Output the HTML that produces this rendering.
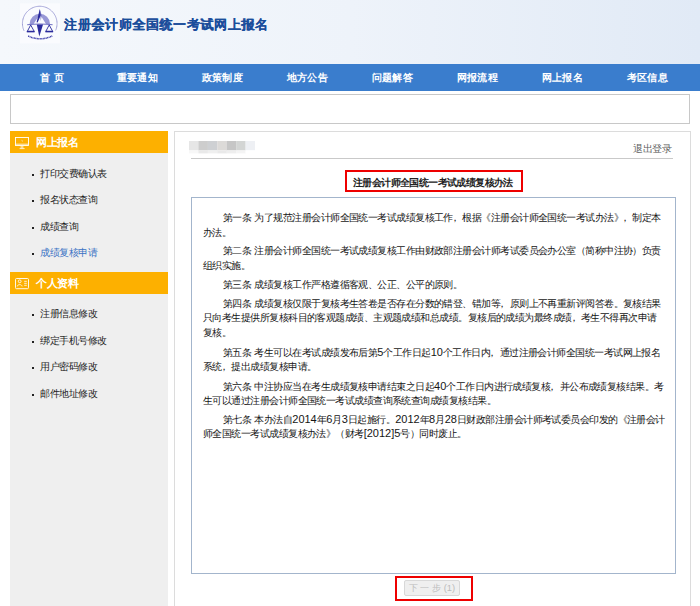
<!DOCTYPE html>
<html><head><meta charset="utf-8">
<style>
*{margin:0;padding:0;box-sizing:border-box}
html,body{width:700px;height:606px;overflow:hidden;background:#fff;font-family:"Liberation Sans",sans-serif;font-size:9.4px;color:#333}
.hdr{position:absolute;left:0;top:0;width:700px;height:64px;background:linear-gradient(90deg,#f5f8fc 0%,#eef3fa 50%,#e1eaf6 100%)}
.logo{position:absolute;left:15px;top:0px;width:50px;height:50px}
.title{position:absolute;left:64px;top:15px;font-size:13.4px;letter-spacing:0.64px;font-weight:bold;color:#1a4d9b;text-shadow:0.35px 0 0 #1a4d9b;white-space:nowrap;line-height:20px}
.nav{position:absolute;left:0;top:64px;width:700px;height:27px;background:#3a7dcd}
.nav span{position:absolute;top:0;width:85px;letter-spacing:0.4px;text-align:center;line-height:27px;color:#fff;font-weight:bold;font-size:10.4px;white-space:nowrap}
.search{position:absolute;left:10px;top:94px;width:680px;height:30px;border:1px solid #c8c8c8;background:#fff}
.side{position:absolute;left:10px;top:131px;width:158px;height:480px;background:#efefef}
.sh{position:absolute;left:0;width:158px;height:22px;background:#fdb000;color:#fff;font-weight:bold;font-size:11px;letter-spacing:-0.4px;line-height:23px}
.sh .t{position:absolute;left:26px;top:0}
.sh svg{position:absolute}
.it{position:absolute;left:30px;font-size:9.7px;letter-spacing:-0.45px;color:#1e1e1e;white-space:nowrap;line-height:14px}
.it i{position:absolute;left:-8.5px;top:6.9px;width:2px;height:2.4px;background:#222}
.main{position:absolute;left:174px;top:131px;width:517px;height:480px;border:1px solid #dcdcdc;background:#fff}
.mosaic{position:absolute;left:189px;top:141.4px;width:66px;height:13px}
.logout{position:absolute;left:633px;top:141.5px;color:#5a5a5a;font-size:10px;letter-spacing:-0.3px;white-space:nowrap;line-height:14px}
.divider{position:absolute;left:191px;top:158px;width:482px;height:1px;background:#c9c9c9}
.rtitle{position:absolute;left:345px;top:170px;width:178px;height:22px;border:2px solid #e00;}
.rtitle span{position:absolute;left:6px;top:5px;font-size:9.7px;letter-spacing:-0.6px;font-weight:bold;color:#222;white-space:nowrap;line-height:12px}
.box{position:absolute;left:191px;top:197px;width:485px;height:377px;border:1px solid #a3b5cc}
.txt{position:absolute;left:203px;top:0;white-space:nowrap;color:#333;line-height:14.8px}
.ln{position:absolute;left:203px;white-space:nowrap;line-height:14px;color:#151515;font-size:9.7px;letter-spacing:-0.55px}
.d{font-size:11px;letter-spacing:0}
.cm{position:relative;left:-3px}
.sp{letter-spacing:0.4px}
.rbtn{position:absolute;left:395px;top:576px;width:78px;height:25px;border:2px solid #e00}
.btn{position:absolute;left:404px;top:580px;width:56px;height:16px;border:1px solid #d8d8d8;border-radius:2px;background:#efefef;color:#bcbcbc;font-size:9.4px;line-height:14px;text-align:center;white-space:nowrap}
</style></head><body>
<div class="hdr"></div>
<svg class="logo" viewBox="0 0 50 50">
  <rect x="5" y="3.3" width="40" height="40" fill="#fafbfe"/>
  <path d="M8.95 30.6 A17.3 17.3 0 1 1 40.55 30.6" fill="none" stroke="#5656b4" stroke-width="1" stroke-dasharray="0.8 0.4" opacity="0.75"/>
  <path d="M13.2 36 Q25 41.6 37.2 36" fill="none" stroke="#3a3aa8" stroke-width="1.5" stroke-dasharray="1 0.5"/>
  <path d="M14.6 24 A10.2 10.2 0 0 1 35 24 L31 24 L24.9 14.2 L18.6 24Z" fill="#9898d6"/>
  <path d="M24.75 8.9 L26 15 L22.6 22.6 L21.6 22.2 Z" fill="#2a2a9c"/>
  <path d="M24.75 8.9 L27 16 L25.4 21 Z" fill="#6a6ac0" opacity="0.6"/>
  <path d="M12.2 24.8 Q24.75 23.2 37.6 24.8" fill="none" stroke="#7070c4" stroke-width="1.1"/>
  <path d="M21.8 24.6 L28 24.6 L24.3 36.4 Z" fill="#2a2a9c"/>
  <path d="M15.7 25 L12.3 31.4 L19.2 31.4 Z" fill="none" stroke="#2a2a9c" stroke-width="0.9"/>
  <path d="M11.8 31.6 L19.6 31.6" stroke="#2a2a9c" stroke-width="1.5"/>
  <path d="M34.2 25 L30.8 31.4 L37.7 31.4 Z" fill="none" stroke="#2a2a9c" stroke-width="0.9"/>
  <path d="M30.4 31.6 L38.1 31.6" stroke="#2a2a9c" stroke-width="1.5"/>
</svg>
<div class="title">注册会计师全国统一考试网上报名</div>
<div class="nav">
  <span style="left:10px">首 页</span>
  <span style="left:95px">重要通知</span>
  <span style="left:180px">政策制度</span>
  <span style="left:265px">地方公告</span>
  <span style="left:350px">问题解答</span>
  <span style="left:435px">网报流程</span>
  <span style="left:520px">网上报名</span>
  <span style="left:605px">考区信息</span>
</div>
<div class="search"></div>
<div class="side">
  <div class="sh" style="top:0">
    <svg width="14" height="13" viewBox="0 0 14 13" style="left:5px;top:5.5px"><rect x="0.5" y="0.5" width="13" height="8" fill="none" stroke="#fff" stroke-width="0.9"/><path d="M0.5 7.2H13.5" stroke="#fff" stroke-width="0.8"/><path d="M6.2 9v2.2M7.8 9v2.2M4.6 11.6H9.6" stroke="#fff" stroke-width="0.8" fill="none"/><path d="M6.6 2.6l1.2 1.6-0.8 0.2z" fill="#fff"/></svg>
    <span class="t">网上报名</span>
  </div>
  <div class="it" style="top:36px"><i></i>打印交费确认表</div>
  <div class="it" style="top:62px"><i></i>报名状态查询</div>
  <div class="it" style="top:89px"><i></i>成绩查询</div>
  <div class="it" style="top:115px;color:#3a72c4"><i></i>成绩复核申请</div>
  <div class="sh" style="top:141px">
    <svg width="14" height="12" viewBox="0 0 14 12" style="left:5px;top:6px"><rect x="0.5" y="0.5" width="13" height="10.2" rx="1" fill="none" stroke="#fff" stroke-width="0.9"/><circle cx="4.7" cy="3.3" r="1.4" fill="none" stroke="#fff" stroke-width="0.8"/><path d="M2.3 8.4c0.2-2.4 4.6-2.4 4.8 0" fill="none" stroke="#fff" stroke-width="0.8"/><path d="M9.2 3.3h2.6M9.2 5.3h2.6M9.2 7.3h2.6" stroke="#fff" stroke-width="0.8"/></svg>
    <span class="t">个人资料</span>
  </div>
  <div class="it" style="top:176px"><i></i>注册信息修改</div>
  <div class="it" style="top:203px"><i></i>绑定手机号修改</div>
  <div class="it" style="top:229px"><i></i>用户密码修改</div>
  <div class="it" style="top:256px"><i></i>邮件地址修改</div>
</div>
<div class="main"></div>
<svg class="mosaic" viewBox="0 0 66 13" width="66" height="13">
<rect x="0.00" y="0" width="9.5" height="9.4" fill="#e6e6e6"/><rect x="0.00" y="9.4" width="9.5" height="3" fill="#f7f7f7"/>
<rect x="9.43" y="0" width="9.5" height="9.4" fill="#cdcdcd"/><rect x="9.43" y="9.4" width="9.5" height="3" fill="#e9e9e9"/>
<rect x="18.86" y="0" width="9.5" height="9.4" fill="#ced0d3"/><rect x="18.86" y="9.4" width="9.5" height="3" fill="#efefef"/>
<rect x="28.29" y="0" width="9.5" height="9.4" fill="#dcdad8"/><rect x="28.29" y="9.4" width="9.5" height="3" fill="#e9e9e9"/>
<rect x="37.72" y="0" width="9.5" height="9.4" fill="#c6c6c6"/><rect x="37.72" y="9.4" width="9.5" height="3" fill="#eeeeee"/>
<rect x="47.15" y="0" width="9.5" height="9.4" fill="#d3d5d4"/><rect x="47.15" y="9.4" width="9.5" height="3" fill="#f4f4f4"/>
<rect x="56.58" y="0" width="9.5" height="9.4" fill="#eef0f4"/><rect x="56.58" y="9.4" width="9.5" height="3" fill="#ffffff"/>
</svg>
<div class="logout">退出登录</div>
<div class="divider"></div>
<div class="rtitle"><span>注册会计师全国统一考试成绩复核办法</span></div>
<div class="box"></div>
<div class="ln" style="top:211px;left:223px">第一条<span class="sp"> </span>为了规范注册会计师全国统一考试成绩复核工作<span class="cm">，</span>根据《注册会计师全国统一考试办法》<span class="cm">，</span>制定本</div>
<div class="ln" style="top:226px">办法。</div>
<div class="ln" style="top:244px;left:223px">第二条<span class="sp"> </span>注册会计师全国统一考试成绩复核工作由财政部注册会计师考试委员会办公室（简称中注协）负责</div>
<div class="ln" style="top:259px">组织实施。</div>
<div class="ln" style="top:278px;left:223px">第三条<span class="sp"> </span>成绩复核工作严格遵循客观、公正、公平的原则。</div>
<div class="ln" style="top:297px;left:223px">第四条<span class="sp"> </span>成绩复核仅限于复核考生答卷是否存在分数的错登、错加等<span class="cm">，</span>原则上不再重新评阅答卷。复核结果</div>
<div class="ln" style="top:311px">只向考生提供所复核科目的客观题成绩、主观题成绩和总成绩。复核后的成绩为最终成绩<span class="cm">，</span>考生不得再次申请</div>
<div class="ln" style="top:326px">复核。</div>
<div class="ln" style="top:345px;left:223px">第五条<span class="sp"> </span>考生可以在考试成绩发布后第<span class="d">5</span>个工作日起<span class="d">10</span>个工作日内<span class="cm">，</span>通过注册会计师全国统一考试网上报名</div>
<div class="ln" style="top:360px">系统<span class="cm">，</span>提出成绩复核申请。</div>
<div class="ln" style="top:379px;left:223px">第六条<span class="sp"> </span>中注协应当在考生成绩复核申请结束之日起<span class="d">40</span>个工作日内进行成绩复核<span class="cm">，</span>并公布成绩复核结果。考</div>
<div class="ln" style="top:394px">生可以通过注册会计师全国统一考试成绩查询系统查询成绩复核结果。</div>
<div class="ln" style="top:412px;left:223px">第七条<span class="sp"> </span>本办法自<span class="d">2014</span>年<span class="d">6</span>月<span class="d">3</span>日起施行。<span class="d">2012</span>年<span class="d">8</span>月<span class="d">28</span>日财政部注册会计师考试委员会印发的《注册会计</div>
<div class="ln" style="top:426px">师全国统一考试成绩复核办法》（财考<span class="d">[2012]5</span>号）同时废止。</div>
<div class="rbtn"></div>
<div class="btn">下 一 步 (1)</div>
</body></html>
